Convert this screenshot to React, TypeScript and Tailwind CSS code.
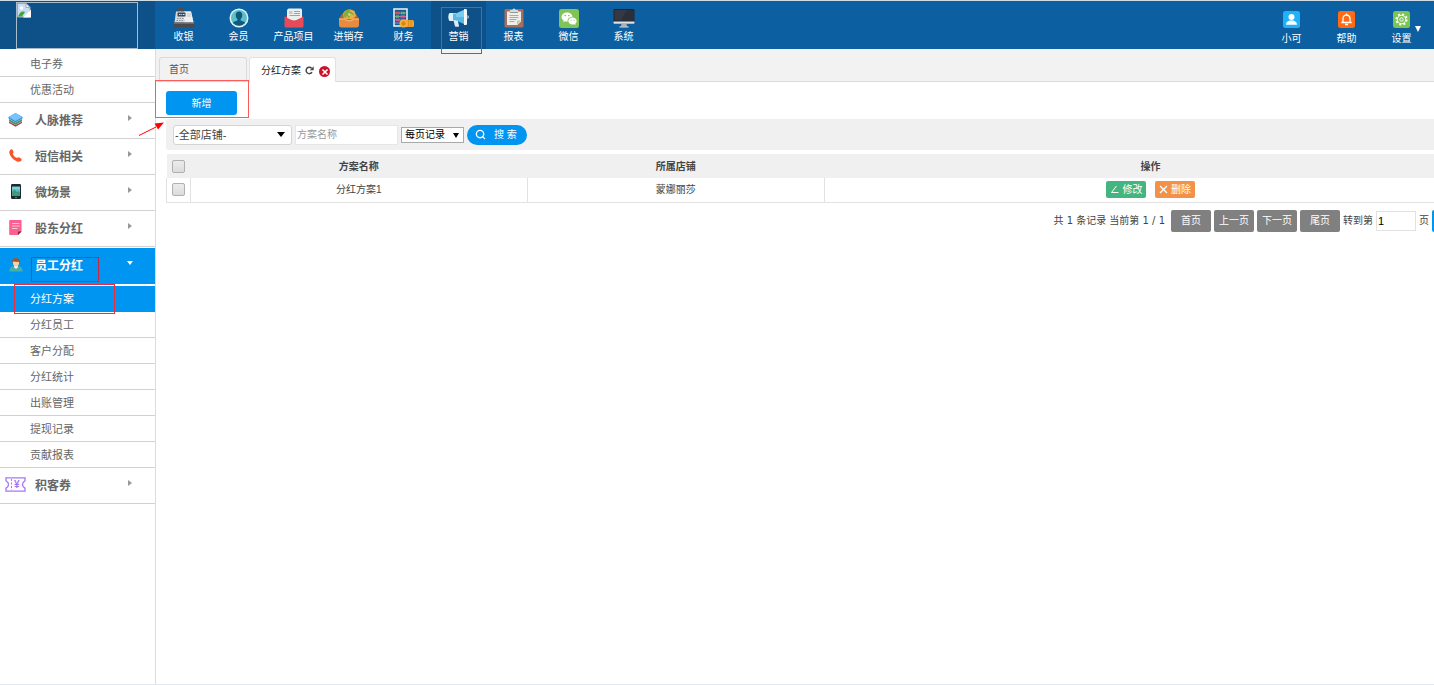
import React, { useState } from 'react';
import { Search, X } from 'lucide-react';

const CashierIcon = () => (
  <svg width="22" height="20" viewBox="0 0 22 20">
    <rect x="4" y="0" width="6" height="3" fill="#4a4d52" />
    <path d="M6 3h2v2H6z" fill="#777" />
    <path d="M3 3.5h15l2.5 11h-19z" fill="#d9d9d9" />
    <path d="M11 3.5h7l2.5 11H11z" fill="#efefef" />
    <rect x="4.5" y="4.5" width="8" height="4" rx=".5" fill="#34495e" />
    <path d="M6 6.5h1.5M8.2 6.5h1M10 6.5h1.5" stroke="#d6e4ee" />
    <path d="M4 10.5h7M3.5 12.5h8" stroke="#8f969c" strokeDasharray="1.5 1" />
    <path d="M14 6h4M14 8h4" stroke="#c4c4c4" />
    <path d="M1 14.5h20l1 4.5H0z" fill="#4a4a4c" />
    <path d="M1 14.5h20v1H1z" fill="#8b8b8d" />
  </svg>
);

const MemberIcon = () => (
  <svg width="20" height="20" viewBox="0 0 20 20">
    <circle cx="10" cy="10" r="9.5" fill="#e4f3f4" />
    <circle cx="10" cy="10" r="8" fill="#5dbfc9" />
    <path d="M10 3.5c2 0 3.3 1.5 3.3 3.6 0 1.8-.8 3.2-1.7 4v1.3l3.4 1.3c.7.3 1 .8 1 1.4a8 8 0 0 1-12 0c0-.6.3-1.100 1-1.400l3.400-1.300v-1.300c-1-.8-1.700-2.200-1.700-4C6.700 5 8 3.500 10 3.500z" fill="#0d5a7c" />
  </svg>
);

const ProductIcon = () => (
  <svg width="20" height="20" viewBox="0 0 20 20">
    <path d="M1 8.5l3-1.5h12l3 1.5V18a1.500 1.500 0 0 1-1.500 1.500h-15A1.500 1.500 0 0 1 1 18z" fill="#b8303f" />
    <path d="M5 .5h11.500c.8 0 1.500.6 1.500 1.500V12l-8 1-7-1V3C3 1.500 3.900.5 5 .5z" fill="#eceff0" />
    <path d="M10 3.500h6M10 5.500h6M5.500 7.500h10.500" stroke="#9aa4aa" />
    <path d="M5 3h3.500v3H5z" fill="#c5ccd0" />
    <path d="M.5 8.500l6.500 3.200c1.800.9 4.200.9 6 0l6.500-3.200V18c0 .8-.7 1.500-1.500 1.500H2c-.8 0-1.500-.7-1.500-1.500z" fill="#e54b58" />
  </svg>
);

const StockIcon = () => (
  <svg width="22" height="20" viewBox="0 0 22 20">
    <path d="M4 6h14l3 5H1z" fill="#b96a27" />
    <path d="M5 5.500C7 1.500 12 0 16.500 3L18 8l-4 3.500H6z" fill="#e9b146" />
    <path d="M5.500 7.500C6 3.500 9 1 12.500 1.500l-1 2c2.500.2 4 1.500 4.500 4l-3-1.500-2 4.500-2-3-1.500 3z" fill="#7fae3c" />
    <path d="M10 5l3 1-2 2.500z" fill="#f6dc7d" />
    <path d="M1 10.500h6.500c.5 2 6.500 2 7 0H21V17c0 1.500-1 2.500-2.500 2.500h-15C2 19.500 1 18.500 1 17z" fill="#e58c42" />
    <path d="M1 10.500h6.500c.5 2 6.500 2 7 0H21v1.200h-5.800c-1 2-7.400 2-8.400 0H1z" fill="#f6b169" />
  </svg>
);

const FinanceIcon = () => (
  <svg width="21" height="20" viewBox="0 0 21 20">
    <rect x="1" y="1" width="13" height="17" fill="#1c5c8c" stroke="#f4f4f4" strokeWidth="1.500" />
    <path d="M2 5h11M2 8.500h11M2 12h11M2 15h11" stroke="#b9c8d1" strokeWidth=".6" />
    <path d="M3 5h4M8.500 12h4" stroke="#e74c5a" strokeWidth="2.400" strokeDasharray="1.300 .3" />
    <path d="M8 5h4M3 8.500h3" stroke="#5ec26a" strokeWidth="2.400" strokeDasharray="1.300 .3" />
    <path d="M7.500 8.500h4.500M3 12h4" stroke="#f0509b" strokeWidth="2.400" strokeDasharray="1.300 .3" />
    <path d="M11 12h8.500a1.500 1.500 0 0 1 1.500 1.500v4a1.500 1.500 0 0 1-1.500 1.500H11z" fill="#f2a12c" />
    <circle cx="10.500" cy="15.500" r="4" fill="#f7b03b" />
    <circle cx="10.500" cy="15.500" r="2.200" fill="#d98517" />
    <path d="M15.500 12v7M18 12v7" stroke="#d98517" strokeWidth=".7" />
  </svg>
);

const MarketingIcon = () => (
  <svg width="21" height="20" viewBox="0 0 21 20">
    <path d="M1.500 5H8v8H1.500C.7 12 .3 10.500.3 9s.4-3 1.200-4z" fill="#dff0f7" />
    <path d="M5 5.500h3L17 1.500v15l-9-4H5z" fill="#55b9e6" />
    <path d="M8 5.500l9-4V9H8z" fill="#7accef" />
    <path d="M5.500 12.500h4.200l1.300 5.300c.1.500-.2.900-.7.900H7.800c-.5 0-.8-.3-.9-.7z" fill="#dcebf2" />
    <path d="M16 1h1.500c1 0 1.500.5 1.500 1.500v13c0 1-.5 1.500-1.500 1.500H16z" fill="#f1f7fa" />
    <path d="M19.500 7c1 .5 1.300 1.200 1.300 2s-.3 1.500-1.300 2z" fill="#c5dce8" />
  </svg>
);

const ReportIcon = () => (
  <svg width="20" height="20" viewBox="0 0 20 20">
    <rect x=".5" y="1" width="19" height="18.500" rx="1.500" fill="#a56f5c" />
    <path d="M3 3.500h14v10L13.500 17H3z" fill="#efeee9" />
    <path d="M17 12.500L13 17v-3.500c0-.6.4-1 1-1z" fill="#c6c4bd" />
    <path d="M5.500 7.500h9M5.500 9.500h9M5.500 11.500h7M5.500 13.500h5" stroke="#a9a9a6" />
    <path d="M6 2h2.500a1.500 1.500 0 0 1 3 0H14v3H6z" fill="#d9dbdc" />
    <path d="M6 4h8v1H6z" fill="#92979b" />
  </svg>
);

const WechatIcon = () => (
  <svg width="20" height="19" viewBox="0 0 20 19">
    <rect width="20" height="19" rx="2.500" fill="#80c455" />
    <path d="M8 3.500c3 0 5.400 1.900 5.500 4.300-3.300 0-5.400 2.200-4.800 4.600-.9.100-1.700 0-2.500-.2L4.200 13.300l.5-1.800C3.400 10.700 2.500 9.400 2.500 8c0-2.500 2.500-4.500 5.500-4.500z" fill="#fff" />
    <path d="M13.500 8.500c2.300 0 4.200 1.600 4.200 3.500 0 1.100-.6 2-1.500 2.700l.4 1.300-1.600-.8c-.5.200-1 .2-1.500.2-2.400 0-4.200-1.500-4.200-3.400s1.900-3.500 4.200-3.500z" fill="#fff" />
    <circle cx="6.200" cy="6.600" r=".8" fill="#80c455" />
    <circle cx="9.800" cy="6.600" r=".8" fill="#80c455" />
    <circle cx="12.200" cy="11" r=".6" fill="#80c455" />
    <circle cx="15" cy="11" r=".6" fill="#80c455" />
  </svg>
);

const SystemIcon = () => (
  <svg width="22" height="20" viewBox="0 0 22 20">
    <rect x=".5" y="1" width="21" height="14.500" rx="1" fill="#22242a" />
    <path d="M1.500 2h19v10.500h-19z" fill="#343945" />
    <path d="M14 2h6.500v10.500h-13z" fill="#2b2f39" />
    <path d="M.5 13.500h21v1.200c0 .6-.4 1-1 1h-19c-.6 0-1-.4-1-1z" fill="#dfe1e3" />
    <path d="M8.500 15.700h5l.6 2.800H8z" fill="#aab0b5" />
    <path d="M6.500 18.300h9v1.200h-9z" fill="#d4d7d9" />
  </svg>
);

const UserIcon = () => (
  <svg width="17" height="17" viewBox="0 0 17 17">
    <rect width="17" height="17" rx="2.500" fill="#1fb2f8" />
    <circle cx="8.500" cy="6" r="3" fill="#fff" />
    <path d="M3 13.800c0-2.600 2-3.800 3.800-4.300h3.400c1.800.5 3.800 1.700 3.800 4.300z" fill="#fff" />
  </svg>
);

const BellIcon = () => (
  <svg width="17" height="17" viewBox="0 0 17 17">
    <rect width="17" height="17" rx="2.500" fill="#ff6a13" />
    <path d="M5 11V7.500a3.500 3.500 0 0 1 7 0V11M3.300 11.500h10.400M8.500 2.500v1.300M7 13.500h3" fill="none" stroke="#fff" strokeWidth="1.300" />
  </svg>
);

const SettingIcon = () => (
  <svg width="17" height="17" viewBox="0 0 17 17">
    <rect width="17" height="17" rx="2.500" fill="#7bc653" />
    <circle cx="8.500" cy="8.500" r="5.200" fill="none" stroke="#fff" strokeWidth="1.800" strokeDasharray="2.050 2.030" />
    <circle cx="8.500" cy="8.500" r="4.200" fill="none" stroke="#fff" strokeWidth="1" />
    <circle cx="8.500" cy="8.500" r="1.700" fill="none" stroke="#fff" />
  </svg>
);

const LayersIcon = () => (
  <svg width="15" height="14" viewBox="0 0 15 14">
    <path d="M1 8.500L7.500 12 14 8.500v1.500L7.500 13.700 1 10z" fill="#c2365c" />
    <path d="M1 6L7.500 9.500 14 6v2.300L7.500 12 1 8.300z" fill="#3d9f6c" />
    <path d="M7.500 0L14.500 4v1.500L7.500 9.500.5 5.500V4z" fill="#3d8fd1" />
    <path d="M7.500 0L14.500 4l-7 4-7-4z" fill="#78c3fb" />
  </svg>
);

const PhoneIcon = () => (
  <svg width="13" height="13" viewBox="0 0 13 13">
    <path d="M1 1.200C1.800.2 2.900 0 3.500.8l1 2c.3.700 0 1.300-.8 1.800.4 1.800 2.200 3.700 4.400 4.500.6-.8 1.300-1 2-.7l2 1.200c.8.600.7 1.600-.1 2.500-1 1-2.700 1-4.500.1C4 10.500 1 7 .4 4.200.200 3 .3 2 1 1.200z" fill="#f9552c" />
  </svg>
);

const MobileIcon = () => (
  <svg width="10" height="15" viewBox="0 0 10 15">
    <rect width="10" height="15" rx="1.300" fill="#1f2a30" />
    <path d="M1 2.500h8v9.500H1z" fill="#5cc0c6" />
    <path d="M1 8l2.500-2.500L6 8l1.500-1L9 8.500V12H1z" fill="#3f9a80" />
    <path d="M1 4h8" stroke="#a5e4e6" />
    <circle cx="5" cy="13.500" r=".7" fill="#9aa8ae" />
  </svg>
);

const NoteIcon = () => (
  <svg width="13" height="15" viewBox="0 0 13 15">
    <path d="M1 0h11.500v11.500L9 15H1a.8.8 0 0 1-.8-.8V.8C.2.300.500 0 1 0z" fill="#fc5f90" />
    <path d="M12.500 11.500L9 15v-3.500z" fill="#7a2746" />
    <path d="M3 3.500h7.500M3 6h7.500M3 8.500h5.500" stroke="#ffc1d4" />
  </svg>
);

const StaffIcon = () => (
  <svg width="14" height="14" viewBox="0 0 14 14">
    <path d="M.5 13.500V12c0-2 1.300-3 3-3.500L5.500 8h3l2 .5c1.700.5 3 1.500 3 3.500v1.500z" fill="#45b0a9" />
    <path d="M5 7.500h4v1.700L7 11 5 9.200z" fill="#f3f3ee" />
    <path d="M4 3.500h6V5c0 2-1.300 3.700-3 3.700S4 7 4 5z" fill="#fbd0a1" />
    <path d="M3.300 5C2.500 1.800 4.300.200 7 .200s4.500 1.600 3.700 4.800L9.500 3.500C8 3.800 6 3.800 4.500 3z" fill="#a9521f" />
  </svg>
);

const TicketIcon = () => (
  <svg width="21" height="15" viewBox="0 0 21 15">
    <path d="M1 .8h19v3c-1.500.7-2.500 2-2.500 3.700s1 3 2.500 3.700v3H1v-3c1.500-.7 2.500-2 2.500-3.700S2.500 4.500 1 3.800z" fill="none" stroke="#a678f5" strokeWidth="1.300" />
    <path d="M6.500 2v11" stroke="#a678f5" strokeDasharray="2 1.500" />
    <text x="9" y="11" fontSize="10" fontWeight="bold" fontFamily="Liberation Sans, sans-serif" fill="#a678f5">¥</text>
  </svg>
);

const RefreshIcon = () => (
  <svg width="9" height="9" viewBox="0 0 9 9">
    <path d="M7 6.200A3.200 3.200 0 1 1 6.600 2.200" fill="none" stroke="#444" strokeWidth="1.500" />
    <path d="M8.700.3v3.900H4.800z" fill="#444" />
  </svg>
);

const BrokenImageIcon = () => (
  <svg width="14" height="15" viewBox="0 0 14 15">
    <path d="M.5.5h8.500l4 4v9.500H.5z" fill="#c8dcf7" stroke="#a8a8a8" />
    <path d="M9 .5v4h4z" fill="#fff" stroke="#a8a8a8" />
    <circle cx="4.500" cy="5" r="1.700" fill="#fff" />
    <path d="M1 13.500c1.500-4 4-6 7-4.500l-3 4.500z" fill="#42a33a" />
    <path d="M14 6.500L6 14.500h8z" fill="#fff" />
  </svg>
);

const mainNav = [
  { label: '收银', icon: CashierIcon },
  { label: '会员', icon: MemberIcon },
  { label: '产品项目', icon: ProductIcon },
  { label: '进销存', icon: StockIcon },
  { label: '财务', icon: FinanceIcon },
  { label: '营销', icon: MarketingIcon },
  { label: '报表', icon: ReportIcon },
  { label: '微信', icon: WechatIcon },
  { label: '系统', icon: SystemIcon }
];

const userNav = [
  { label: '小可', icon: UserIcon },
  { label: '帮助', icon: BellIcon },
  { label: '设置', icon: SettingIcon }
];

const sideGroups = [
  { label: '人脉推荐', icon: LayersIcon, items: [] },
  { label: '短信相关', icon: PhoneIcon, items: [] },
  { label: '微场景', icon: MobileIcon, items: [] },
  { label: '股东分红', icon: NoteIcon, items: [] },
  {
    label: '员工分红',
    icon: StaffIcon,
    items: ['分红方案', '分红员工', '客户分配', '分红统计', '出账管理', '提现记录', '贡献报表']
  },
  { label: '积客券', icon: TicketIcon, items: [] }
];

const Header: React.FC = () => (
  <header className="flex h-[49px] border-t border-[#cfdce6] bg-[#0c60a1] text-white">
    <div className="w-[155px] shrink-0 bg-[#0e5188] pt-px pl-4">
      <div className="h-[47px] w-[122px] border border-[#a9bccb]">
        <BrokenImageIcon />
      </div>
    </div>
    <nav className="flex flex-1 pl-px">
      {mainNav.map((item) => (
        <a
          key={item.label}
          href="#"
          className={`relative flex w-[55px] flex-col items-center pt-[7px] ${
            item.label === '营销' ? 'bg-[#0e5188]' : ''
          }`}
        >
          <span className="flex h-5 items-center">
            <item.icon />
          </span>
          <span className="mt-[2px] text-[10px] leading-[14px] whitespace-nowrap">{item.label}</span>
          {item.label === '营销' && (
            <span className="absolute top-[6px] left-[10px] z-10 h-[47px] w-[41px] border border-[#e8323c]" />
          )}
        </a>
      ))}
    </nav>
    <div className="flex pr-[5px]">
      {userNav.map((item) => (
        <a key={item.label} href="#" className="relative flex w-[55px] flex-col items-center pt-[10px]">
          <item.icon />
          <span className="mt-1 text-[10px] leading-[14px]">{item.label}</span>
          {item.label === '设置' && (
            <span className="absolute top-[25px] right-[8px] border-x-[3px] border-t-[6px] border-x-transparent border-t-white" />
          )}
        </a>
      ))}
    </div>
  </header>
);

const Sidebar: React.FC = () => {
  const [active, setActive] = useState('分红方案');

  return (
    <aside className="w-[156px] shrink-0 border-r border-[#dcdcdc] bg-white text-[#666]">
      <ul className="pt-[2px]">
        {['电子券', '优惠活动'].map((item) => (
          <li key={item} className="h-[26px] border-b border-[#d2d2d2] pl-[30px] text-[11px] leading-[26px]">
            <a href="#">{item}</a>
          </li>
        ))}
      </ul>
      {sideGroups.map((group) => {
        const open = group.items.length > 0;
        return (
          <div key={group.label}>
            <button
              type="button"
              className={`relative flex h-[36px] w-full items-center border-b text-left ${
                open ? 'mt-px border-[#0095f0] bg-[#0095f0] text-white' : 'border-[#d2d2d2]'
              }`}
            >
              <span className="flex w-[31px] justify-center pb-[2px]">
                <group.icon />
              </span>
              <span className="flex-1 pt-px pl-1 text-[12px] font-bold">{group.label}</span>
              {open ? (
                <span className="mr-[22px] mb-[6px] border-x-[3px] border-t-[4px] border-x-transparent border-t-white" />
              ) : (
                <span className="mr-[23px] mb-[6px] border-y-[3px] border-l-[4px] border-y-transparent border-l-[#999]" />
              )}
              {open && (
                <span className="absolute top-[9px] left-[31px] h-[25px] w-[68px] border border-[#c8283f]" />
              )}
            </button>
            {open && (
              <ul className="pt-[2px]">
                {group.items.map((item) => (
                  <li
                    key={item}
                    className={`relative h-[26px] border-b pl-[30px] text-[11px] leading-[26px] ${
                      active === item ? 'border-[#0095f0] bg-[#0095f0] text-white' : 'border-[#d2d2d2]'
                    }`}
                  >
                    <a href="#" onClick={() => setActive(item)}>
                      {item}
                    </a>
                    {item === '分红方案' && (
                      <span className="absolute -top-[2px] left-[14px] z-10 h-[30px] w-[101px] border border-[#f02c3c]" />
                    )}
                  </li>
                ))}
              </ul>
            )}
          </div>
        );
      })}
    </aside>
  );
};

const Tabs: React.FC = () => (
  <div className="flex h-[33px] items-end gap-[2px] border-b border-[#d5dde3] bg-[#f2f2f2] pl-[3px] text-[10px]">
    <button type="button" className="flex h-[24px] w-[88px] items-center rounded-t-[3px] border border-b-0 border-[#dadada] pl-[9px] text-[#555]">
      首页
    </button>
    <div className="-mb-px flex h-[25px] w-[87px] items-center rounded-t-[3px] border border-b-0 border-[#e2e2e2] bg-white pl-[11px] text-[#222]">
      <a href="#">分红方案</a>
      <button type="button" aria-label="刷新" className="ml-[4px]">
        <RefreshIcon />
      </button>
      <button type="button" aria-label="关闭" className="mt-[3px] ml-[5px] flex size-[11px] items-center justify-center rounded-full bg-[#c8142b]">
        <X size={8} strokeWidth={5} color="#fff" />
      </button>
    </div>
  </div>
);

const FilterBar: React.FC = () => (
  <form className="flex h-[31px] items-center rounded-l-[3px] bg-[#f0f0f0] pl-[7px]">
    <div className="relative">
      <select aria-label="店铺" className="block h-5 w-[119px] appearance-none rounded-[3px] border border-[#d4d4d4] bg-white pl-px text-[11px] leading-[18px] text-[#444]">
        <option>-全部店铺-</option>
      </select>
      <span className="pointer-events-none absolute top-[7px] right-[7px] border-x-[4px] border-t-[5px] border-x-transparent border-t-black" />
    </div>
    <input
      type="text"
      aria-label="方案名称"
      placeholder="方案名称"
      className="ml-[3px] h-5 w-[103px] border border-[#e6e6e6] bg-white pl-px text-[10px] placeholder:text-[#999]"
    />
    <div className="relative ml-[3px]">
      <select aria-label="每页记录" className="block h-4 w-[63px] appearance-none border border-[#a9a9a9] bg-white pl-[3px] text-[10px] leading-[14px] text-black">
        <option>每页记录</option>
      </select>
      <span className="pointer-events-none absolute top-[6px] right-[5px] border-x-[3px] border-t-[5px] border-x-transparent border-t-black" />
    </div>
    <button type="button" className="ml-[3px] flex h-5 w-[60px] items-center rounded-full bg-[#0095f0] pl-[8px] text-[10px] text-white">
      <Search size={11} strokeWidth={3} />
      <span className="pl-[8px]">搜 索</span>
    </button>
  </form>
);

const checkboxClass =
  'block mx-auto size-[13px] appearance-none rounded-[2px] border border-[#b0b0b0] bg-linear-to-b from-[#ececec] to-[#dcdcdc]';

const PlanTable: React.FC = () => (
  <table className="mt-[4px] w-full table-fixed border-collapse text-[10px] text-[#444]">
    <thead>
      <tr className="h-[24px] bg-[#f0f0f0]">
        <th className="w-[24px]">
          <input type="checkbox" aria-label="全选" className={checkboxClass} />
        </th>
        <th className="w-[25.7%] font-bold">方案名称</th>
        <th className="w-[22.7%] font-bold">所属店铺</th>
        <th className="font-bold">操作</th>
      </tr>
    </thead>
    <tbody>
      <tr className="h-[24px] text-center">
        <td className="border border-t-0 border-[#e2e2e2]">
          <input type="checkbox" aria-label="选择 分红方案1" className={checkboxClass} />
        </td>
        <td className="border border-t-0 border-[#e2e2e2]">分红方案1</td>
        <td className="border border-t-0 border-[#e2e2e2]">蒙娜丽莎</td>
        <td className="border border-t-0 border-[#e2e2e2]">
          <div className="flex justify-center gap-[9px] text-white">
            <button type="button" className="flex h-[17px] w-[40px] items-center justify-center gap-[4px] rounded-[2px] bg-[#43b57f]">
              <svg width="9" height="9" viewBox="0 0 9 9">
                <path d="M6.500 1L1.500 7.500H8.500" fill="none" stroke="#fff" />
              </svg>
              修改
            </button>
            <button type="button" className="flex h-[17px] w-[40px] items-center justify-center gap-[3px] rounded-[2px] bg-[#f2914a]">
              <svg width="9" height="9" viewBox="0 0 9 9">
                <path d="M1 1l7 7M8 1L1 8" fill="none" stroke="#fff" strokeWidth="1.300" />
              </svg>
              删除
            </button>
          </div>
        </td>
      </tr>
    </tbody>
  </table>
);

const Pagination: React.FC = () => (
  <div className="mt-[7px] flex h-[22px] items-center justify-end gap-[3px] font-['DejaVu_Sans','Noto_Sans_CJK_SC',sans-serif] text-[10px] text-[#444]">
    <span className="mr-[3px] whitespace-nowrap">共 1 条记录 当前第 1 / 1</span>
    {['首页', '上一页', '下一页', '尾页'].map((label) => (
      <button key={label} type="button" className="h-[22px] w-[40px] rounded-[2px] bg-[#808080] text-white">
        {label}
      </button>
    ))}
    <label htmlFor="page-no">转到第</label>
    <input id="page-no" type="text" defaultValue="1" className="h-5 w-[40px] border border-[#e2e2e2] pl-px font-['Liberation_Sans',sans-serif] text-[11px] text-black" />
    <span>页</span>
    <button type="button" aria-label="跳转" className="h-[22px] w-[45px] rounded-[2px] bg-[#0095f0]" />
  </div>
);

export default function App() {
  return (
    <div className="flex min-h-screen flex-col overflow-hidden bg-white font-['Liberation_Sans','Noto_Sans_CJK_SC',sans-serif]">
      <Header />
      <div className="flex flex-1 border-b border-[#e3e9ee]">
        <Sidebar />
        <main className="min-w-0 flex-1">
          <Tabs />
          <div className="pt-[9px] pl-[10px]">
            <div className="relative">
              <button type="button" className="block h-6 w-[71px] rounded-[3px] bg-[#0095f0] text-[10px] text-white">
                新增
              </button>
              <span className="pointer-events-none absolute -top-[11px] -left-[11px] h-[38px] w-[94px] border border-[#ff5a5a]" />
              <svg className="pointer-events-none absolute top-[29px] -left-[28px]" width="27" height="17" viewBox="0 0 27 17">
                <path d="M1 15.500L18 7" stroke="#f00" strokeWidth="1" />
                <path d="M26 2.500L16.500 3.500l3.500 6z" fill="#f00" />
              </svg>
            </div>
            {/* The records area runs past the right edge of the window */}
            <div className="mt-[4px] w-[calc(100%+43px)]">
              <FilterBar />
              <PlanTable />
              <Pagination />
            </div>
          </div>
        </main>
      </div>
    </div>
  );
}
